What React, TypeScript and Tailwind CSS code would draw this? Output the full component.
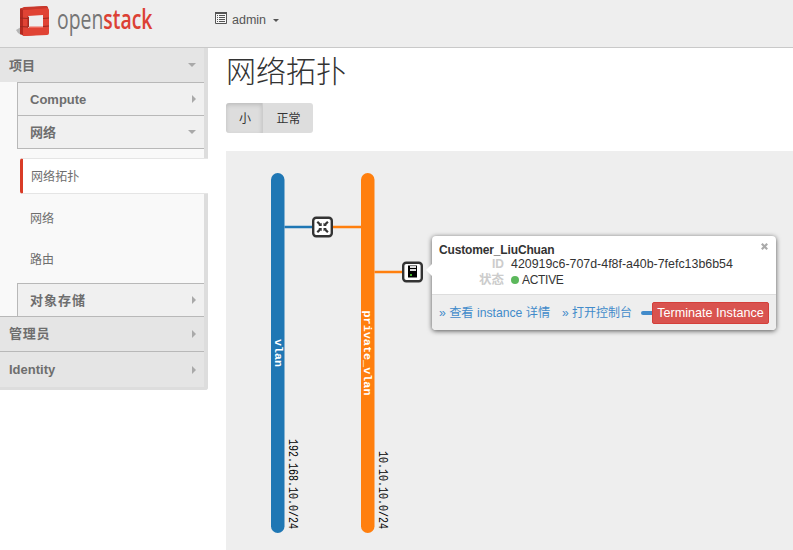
import React from "react";

function Caret({ down = false }: { down?: boolean }) {
  return down ? (
    <span className="mr-2 h-0 w-0 border-x-[4px] border-t-[4.5px] border-x-transparent border-t-[#a9a9a9]" />
  ) : (
    <span className="mr-2 h-0 w-0 border-y-[4px] border-l-[4.5px] border-y-transparent border-l-[#a9a9a9]" />
  );
}

function Logo() {
  return (
    <svg width="145" height="46" viewBox="0 0 145 46" className="ml-4 shrink-0">
      <path d="M0 30L5 27V35L2 33Z" fill="#b5b5b5" />
      <path d="M4 9Q4 8 6 8L30 6Q32 6 32 8V34L8 36L4 34Z" fill="#b52a20" />
      <path d="M4 9L8 7L30 6L32 8L8 10Z" fill="#c9382c" />
      <path d="M7 10L31 8Q33 8 33 10V33Q33 35 31 35L8 36Q7 36 7 35Z" fill="#e04334" />
      <path d="M4 18L12 18.5M4 26.5L12 27M27 18.5L33 18M27 26.5L33 26" stroke="#9d281f" strokeWidth="1" />
      <path d="M12 16L27 15V28H12Z" fill="#eee" />
      <path d="M11.5 16L13 17V26.5L11.5 28Z" fill="#a5291f" />
      <path d="M12 28L13.5 26.5H27V28Z" fill="#ee6a5c" />
      <text transform="translate(41 28.5) scale(0.718 1)" fontSize="27" fill="#757575" className="font-['Open_Sans',sans-serif]">open<tspan fill="#dc4034" fontWeight="600">stack</tspan></text>
    </svg>
  );
}

function Header() {
  return (
    <header className="flex h-12 items-start border-b border-[#c9c9c9] bg-[#eee]">
      <Logo />
      <div className="ml-[54px] flex h-10 items-center text-[12.5px] text-[#555]">
        <svg width="12" height="12" viewBox="0 0 12 12" className="-mt-1 mr-[5px]">
          <path d="M.5 .5H11.5V11.5H.5Z" fill="#f7f7f7" stroke="#555" />
          <path d="M0 1H12" stroke="#555" strokeWidth="2" />
          <path d="M2 3.5H3M4 3.5H10M2 5.5H3M4 5.5H10M2 7.5H3M4 7.5H10M2 9.5H3M4 9.5H10" stroke="#555" />
        </svg>
        <span className="w-[35px]">admin</span>
        <span className="ml-[6px] h-0 w-0 border-x-[3px] border-t-[3px] border-x-transparent border-t-[#555]" />
      </div>
    </header>
  );
}

function Sidebar() {
  return (
    <aside className="h-[342px] w-[208px] shrink-0 rounded-br-[3px] border-r-4 border-b-4 border-[#ddd] bg-[#f9f9f9] text-[13px] text-[#6e6e6e]">
      <div className="flex h-[34px] items-center justify-between bg-[#e5e5e5] pl-[9px] font-bold"><span className="pt-px">项目</span><Caret down /></div>
      <div className="ml-[17px] flex h-[33px] items-center justify-between border-t border-l border-[#b8b8b8] bg-[#f0f0f0] pl-3 font-bold">
        <span className="pt-0.5">Compute</span><Caret />
      </div>
      <div className="ml-[17px] flex h-[34px] items-center justify-between border-y border-l border-[#b8b8b8] bg-[#f0f0f0] pl-3 font-bold">
        <span className="pt-px">网络</span><Caret down />
      </div>
      <div className="mt-[9px] -mr-1 ml-5 flex h-9 items-center rounded-l-[3px] border-y border-l-[3px] border-y-[#e5e5e5] border-l-[#d93c27] bg-white pt-px pl-2 text-[12px] tracking-[0.1px]">网络拓扑</div>
      <div className="mt-[6px] flex h-9 items-center pt-px pl-[30px] text-[12px]">网络</div>
      <div className="mt-[6px] flex h-9 items-center pl-[30px] text-[12px]">路由</div>
      <div className="mt-[5px] ml-[17px] flex h-[33px] items-center justify-between border-t border-l border-[#b8b8b8] bg-[#f0f0f0] pl-3 font-bold">
        <span className="pt-px tracking-[1px]">对象存储</span><Caret />
      </div>
      <div className="flex h-[35px] items-center justify-between border-t border-[#b8b8b8] bg-[#e5e5e5] pl-[9px] font-bold"><span className="tracking-[0.7px]">管理员</span><Caret /></div>
      <div className="flex h-[36px] items-center justify-between border-t border-[#b8b8b8] bg-[#e5e5e5] pl-[9px] font-bold"><span>Identity</span><Caret /></div>
    </aside>
  );
}

function Diagram() {
  return (
    <svg width="200" height="399" viewBox="226 151 200 399">
      <rect x="271" y="173" width="13.5" height="360" rx="6.75" fill="#1f77b4" />
      <rect x="361" y="173" width="13.5" height="360" rx="6.75" fill="#ff7f0e" />
      <path d="M284.5 227H313" stroke="#1f77b4" strokeWidth="2.5" />
      <path d="M333 227H361M374.5 272H403" stroke="#ff7f0e" strokeWidth="2.5" />
      <rect x="313.2" y="217.7" width="18.6" height="18.6" rx="3" fill="#fff" stroke="#333" strokeWidth="2.4" />
      <g stroke="#333" strokeWidth="2.2" fill="#333">
        <path d="M317.3 221.8L320.2 224.6M327.9 221.8L325 224.6M317.3 232.2L320.2 229.4M327.9 232.2L325 229.4" />
        <path stroke="none" d="M321.7 226.1V222.8L318.4 226.1ZM323.5 226.1V222.8L326.8 226.1ZM321.7 227.9V231.2L318.4 227.9ZM323.5 227.9V231.2L326.8 227.9Z" />
      </g>
      <rect x="403.2" y="262.7" width="18.6" height="18.6" rx="3" fill="#fff" stroke="#333" strokeWidth="2.4" />
      <path d="M408 265.5H417V277.5H408Z" fill="#000" />
      <path d="M410 266H416V268H410ZM410 269H416V271H410Z" fill="#ddd" />
      <path d="M410 274H412V276H410Z" fill="#3fae28" />
      <g fontSize="12" className="font-['Liberation_Mono',monospace]">
        <g fill="#fff" fontWeight="bold" fontSize="10.5">
          <text transform="translate(274.5 339) rotate(90)" textLength="28" lengthAdjust="spacingAndGlyphs">vlan</text>
          <text transform="translate(364 310.5) rotate(90)" textLength="85" lengthAdjust="spacingAndGlyphs">private_vlan</text>
        </g>
        <text transform="translate(289 439) rotate(90)" textLength="90" lengthAdjust="spacingAndGlyphs">192.168.10.0/24</text>
        <text transform="translate(379 451) rotate(90)" textLength="78" lengthAdjust="spacingAndGlyphs">10.10.10.0/24</text>
      </g>
    </svg>
  );
}

function Balloon() {
  return (
    <div className="absolute top-[85px] left-[206px] h-[94px] w-[344px] rounded-[4px] bg-white text-[12px] shadow-[0_1px_5px_rgba(0,0,0,0.65)]">
      <span className="absolute top-[28px] -left-[6px] h-0 w-0 border-y-[6px] border-r-[6px] border-y-transparent border-r-white" />
      <svg className="absolute top-[7px] right-[8px]" width="7" height="7" viewBox="0 0 7 7"><path d="M.8 .8L6.2 6.2M6.2 .8L.8 6.2" stroke="#aaa" strokeWidth="2.2" /></svg>
      <div className="h-[58px] pt-[6px] pl-[7px] text-[#333]">
        <div className="h-[15px] text-[12px] leading-[16px] font-bold tracking-[-0.15px]">Customer_LiuChuan</div>
        <div className="flex h-[15px] leading-[15px]"><b className="w-[65px] text-right text-[#ccc]">ID</b><span className="ml-[7px] text-[12.4px] whitespace-nowrap">420919c6-707d-4f8f-a40b-7fefc13b6b54</span></div>
        <div className="flex h-4 items-center leading-4"><b className="w-[65px] text-right text-[12.5px] text-[#ccc]">状态</b><span className="ml-[7px] h-2 w-2 rounded-full bg-[#5cb85c]" /><span className="ml-[3px] tracking-[-0.3px]">ACTIVE</span></div>
      </div>
      <div className="flex h-9 items-center rounded-b-[4px] border-t border-[#ddd] bg-[#eee] pl-[7px] whitespace-nowrap text-[#428bca]">
        <span className="w-[123px] pt-px text-[12.2px]">» 查看 instance 详情</span>
        <span className="w-[79px]">» 打开控制台</span>
        <span className="h-1 w-[11px] rounded-l-full bg-[#428bca]" />
        <span className="flex h-[22px] w-[117px] items-center justify-center rounded-[2px] border border-[#d43f3a] bg-[#d9534f] pt-px text-[12.6px] text-white">Terminate Instance</span>
      </div>
    </div>
  );
}

export default function App() {
  return (
    <div className="h-[550px] w-[793px] overflow-hidden bg-white font-['Liberation_Sans','Noto_Sans_CJK_SC',sans-serif]">
      <Header />
      <div className="flex">
        <Sidebar />
        <main className="ml-[18px] flex-1">
          <h1 className="h-[55px] pt-[2px] text-[30px] leading-[44px] font-light text-[#333]">网络拓扑</h1>
          <div className="flex h-[30px] w-[87px] overflow-hidden rounded-[3px] bg-[#ddd] text-[12px] text-[#333]">
            <span className="flex w-[37px] items-center justify-center border-r border-[#ccc] pt-px pl-0.5 shadow-[inset_0_2px_4px_rgba(0,0,0,0.15)]">小</span>
            <span className="flex flex-1 items-center justify-center pt-px pl-px">正常</span>
          </div>
          <section className="relative mt-[18px] h-[399px] bg-[#eee]">
            <Diagram />
            <Balloon />
          </section>
        </main>
      </div>
    </div>
  );
}
